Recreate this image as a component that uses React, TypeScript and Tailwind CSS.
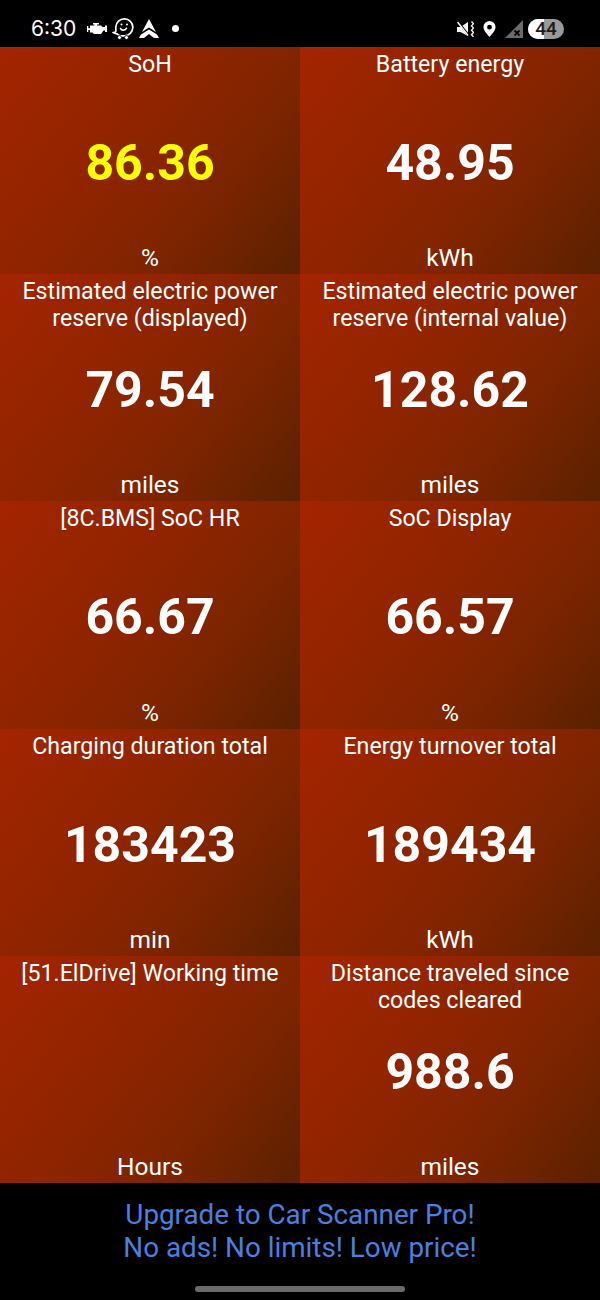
const cells: { label: string; value: string; unit: string; yellow?: boolean }[] = [
  { label: "SoH", value: "86.36", unit: "%", yellow: true },
  { label: "Battery energy", value: "48.95", unit: "kWh" },
  { label: "Estimated electric power reserve (displayed)", value: "79.54", unit: "miles" },
  { label: "Estimated electric power reserve (internal value)", value: "128.62", unit: "miles" },
  { label: "[8C.BMS] SoC HR", value: "66.67", unit: "%" },
  { label: "SoC Display", value: "66.57", unit: "%" },
  { label: "Charging duration total", value: "183423", unit: "min" },
  { label: "Energy turnover total", value: "189434", unit: "kWh" },
  { label: "[51.ElDrive] Working time", value: "", unit: "Hours" },
  { label: "Distance traveled since codes cleared", value: "988.6", unit: "miles" },
];

function Engine() {
  return (
    <svg width="20" height="11" viewBox="0 0 20 11" fill="#fff">
      <path d="M6 0h6v1.500h-2V2.500h4l1.500 1.500H18V2.500h2V9h-2V7.500h-1.500L14 11H7L5.500 9.500H3V7H1.300V9H0V3h1.300v2.200H3V2.500h4.500v-1H6z" />
    </svg>
  );
}

function Waze() {
  return (
    <svg width="22" height="24" viewBox="0 0 22 24" fill="none" stroke="#fff" strokeWidth="1.700">
      <path d="M3.800 14.500V10a8.500 8.500 0 1 1 8.500 8.800H9C7 18.800 6 17.500 5 16.800 3.500 16.500 2 16.500 1 15.500c1.500 0 2.500-.2 2.800-1z" strokeLinejoin="round" />
      <path d="M8.500 11.500c.8 2.300 5 2.300 6 -.2" strokeLinecap="round" />
      <circle cx="9.500" cy="7.500" r="1" fill="#fff" stroke="none" />
      <circle cx="15" cy="7.500" r="1" fill="#fff" stroke="none" />
      <circle cx="7.500" cy="20.500" r="2" fill="#fff" stroke="#000" strokeWidth=".8" />
      <circle cx="14.500" cy="20.500" r="2" fill="#fff" stroke="#000" strokeWidth=".8" />
    </svg>
  );
}

function AndroidAuto() {
  return (
    <svg width="20" height="19" viewBox="0 0 20 19" fill="#fff">
      <path d="M10 0L17 13 10 8.500 3 13z" />
      <path d="M10 10.500L18 15.500 20 19H15L10 15 5 19H0L2 15.500z" />
    </svg>
  );
}

function MuteVibrate() {
  return (
    <svg width="17" height="16" viewBox="0 0 17 16" fill="#fff">
      <path d="M0 5h3.500L11 0v14L3.500 10H0z" transform="translate(0 1)" />
      <path d="M.5 0L12 15" stroke="#000" strokeWidth="2.200" />
      <path d="M.5 1L11 14.500" stroke="#fff" strokeWidth="1.500" />
      <path d="M14.500 .5l2 2.200-2 2.200 2 2.200-2 2.200 2 2.200-2 2.200 2 2.200" fill="none" stroke="#fff" strokeWidth="1.300" />
    </svg>
  );
}

function Pin() {
  return (
    <svg width="13" height="16" viewBox="0 0 14 18" fill="#fff" fillRule="evenodd">
      <path d="M7 0a6.800 6.800 0 0 1 6.800 6.800C13.800 11 9 15.500 7 18 5 15.500.2 11 .2 6.800A6.800 6.800 0 0 1 7 0zm0 4.200a2.700 2.700 0 1 0 0 5.400 2.700 2.700 0 0 0 0-5.400z" />
    </svg>
  );
}

function Signal() {
  return (
    <svg width="18" height="18" viewBox="0 0 18 18">
      <path d="M18 0V18H0z" fill="#6b6b6b" />
      <path d="M9.500 10.500l5 5M14.500 10.500l-5 5" stroke="#000" strokeWidth="1.800" />
    </svg>
  );
}

function Battery() {
  return (
    <div className="relative ml-[5px] flex h-[20px] w-[36px] items-center justify-center overflow-hidden rounded-full bg-[#9a9a9a]">
      <div className="absolute inset-y-0 left-0 w-[16px] bg-white" />
      <span className="relative text-[19px] leading-none font-medium text-[#1a1a1a]">44</span>
    </div>
  );
}

export default function App() {
  return (
    <div className="flex h-[1300px] w-[600px] flex-col bg-black font-['Roboto',sans-serif] text-white">
      <div className="flex h-[47px] items-center pt-[10px] pr-[36px] pl-[31px]">
        <span className="w-[47px] font-['Inter',sans-serif] text-[21px] leading-none">6:30</span>
        <div className="ml-[9px] flex items-center">
          <Engine />
          <div className="ml-[5px]"><Waze /></div>
          <div className="ml-[5px]"><AndroidAuto /></div>
          <div className="ml-[13px] h-[7px] w-[7px] rounded-full bg-white" />
        </div>
        <div className="ml-auto flex items-center">
          <MuteVibrate />
          <div className="ml-[9px]"><Pin /></div>
          <div className="ml-[9px]"><Signal /></div>
          <Battery />
        </div>
      </div>
      <div className="grid h-[1136px] grid-cols-2 grid-rows-5">
        {cells.map((c) => (
          <div
            key={c.label}
            className="grid grid-rows-[1fr_auto_1fr] bg-[linear-gradient(128deg,#a42400_0%,#8e2400_45%,#7c2400_70%,#5a2100_100%)] px-[14px] pt-[4px] pb-[3px] text-center"
          >
            <div className="text-[23.2px] leading-[27px]">{c.label}</div>
            <div className={`h-[60px] pt-[4px] text-[50px] leading-[56px] font-bold ${c.yellow ? "text-[#ffff00]" : "text-white"}`}>
              {c.value}
            </div>
            <div className="self-end text-[24.500px] leading-[27px]">{c.unit}</div>
          </div>
        ))}
      </div>
      <div className="flex flex-1 flex-col items-center">
        <div className="mt-[15px] text-center text-[27.8px] leading-[33px] text-[#4a80e0]">
          <div>Upgrade to Car Scanner Pro!</div>
          <div>No ads! No limits! Low price!</div>
        </div>
        <div className="mt-auto mb-[8px] h-[6px] w-[210px] rounded-full bg-[#6a6a6a]" />
      </div>
    </div>
  );
}
